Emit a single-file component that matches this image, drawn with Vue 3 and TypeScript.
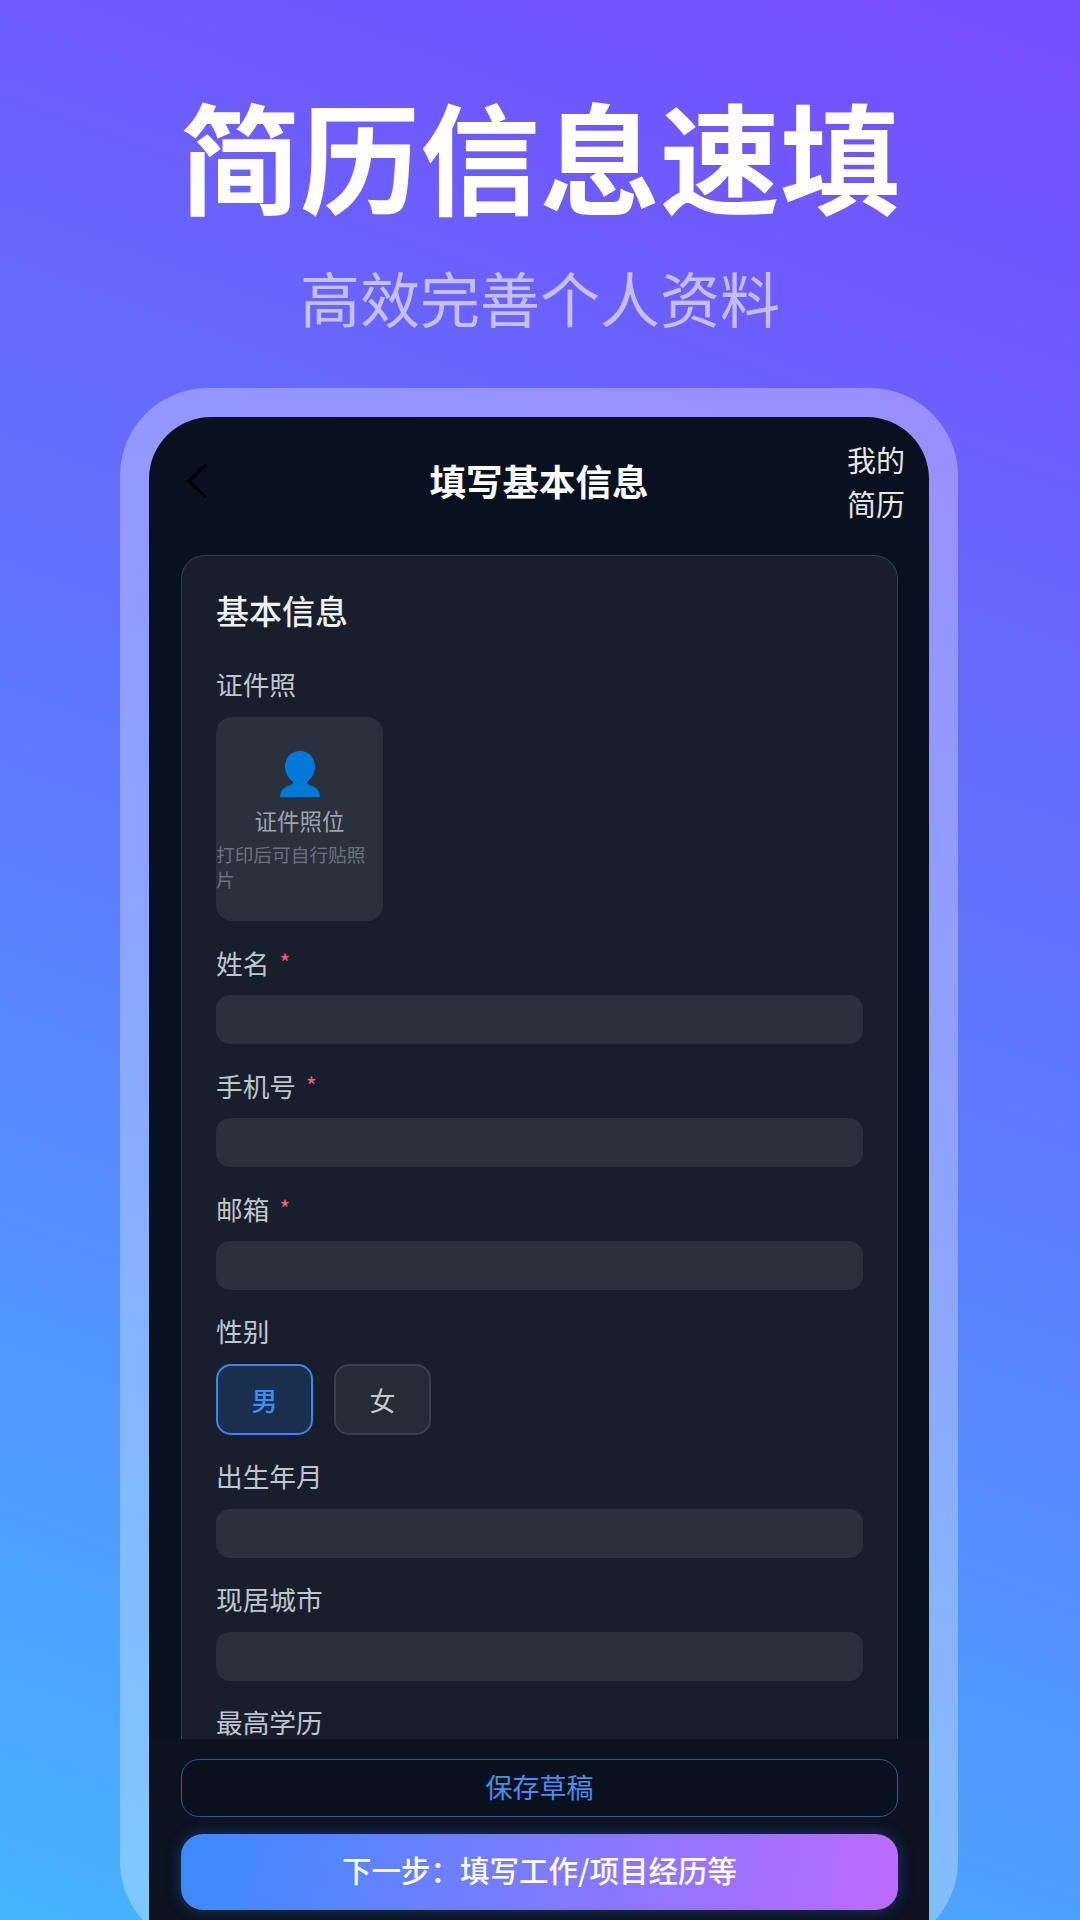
<script setup lang="ts">
interface Field {
  label: string
  required?: boolean
}
const contactFields: Field[] = [
  { label: '姓名', required: true },
  { label: '手机号', required: true },
  { label: '邮箱', required: true },
]
const extraFields: Field[] = [{ label: '出生年月' }, { label: '现居城市' }]
</script>

<template>
  <div class="page">
    <header class="hero">
      <h1 class="hero-title">简历信息速填</h1>
      <p class="hero-sub">高效完善个人资料</p>
    </header>
    <div class="frame">
      <div class="screen">
        <div class="nav">
          <svg class="back" width="20" height="34" viewBox="0 0 20 34" fill="none">
            <path d="M19 1 L2 17 L19 33" stroke="#000" stroke-width="3" />
          </svg>
          <div class="nav-title">填写基本信息</div>
          <div class="nav-link">我的简历</div>
        </div>
        <div class="scroller">
          <section class="card">
            <h2 class="card-title">基本信息</h2>
            <div class="field">
              <div class="label">证件照</div>
              <div class="photo">
                <svg class="photo-icon" width="40" height="46" viewBox="0 0 40 46">
                  <path
                    d="M20 0C29 0 35 7 35 15C35 23 31 28 27 31C27 33 29 34 32 35C37 37 40 41 40 46H0C0 41 3 37 8 35C11 34 13 33 13 31C9 28 5 23 5 15C5 7 11 0 20 0Z"
                    fill="#0078d7"
                  />
                </svg>
                <div class="photo-text">证件照位</div>
                <div class="photo-hint">打印后可自行贴照片</div>
              </div>
            </div>
            <div v-for="f in contactFields" :key="f.label" class="field">
              <div class="label">
                {{ f.label }}<span v-if="f.required" class="star">*</span>
              </div>
              <div class="input"></div>
            </div>
            <div class="field">
              <div class="label">性别</div>
              <div class="options">
                <div class="option option-on">男</div>
                <div class="option">女</div>
              </div>
            </div>
            <div v-for="f in extraFields" :key="f.label" class="field">
              <div class="label">{{ f.label }}</div>
              <div class="input"></div>
            </div>
            <div class="field">
              <div class="label">最高学历</div>
              <div class="input"></div>
            </div>
          </section>
        </div>
        <footer class="actions">
          <div class="btn-save">保存草稿</div>
          <div class="btn-next">下一步：填写工作/项目经历等</div>
        </footer>
      </div>
    </div>
  </div>
</template>

<style>
html,
body {
  margin: 0;
  padding: 0;
}
</style>

<style scoped>
.page {
  width: 1080px;
  height: 1920px;
  overflow: hidden;
  background: linear-gradient(200deg, #764dff 0%, #5a80ff 56%, #45b4ff 100%);
  font-family: "Noto Sans CJK SC", "Noto Sans", sans-serif;
}
.hero {
  padding-top: 79px;
  text-align: center;
}
.hero-title {
  margin: 0;
  font-size: 120px;
  line-height: 150px;
  font-weight: 700;
  color: #fff;
}
.hero-sub {
  margin: 30px 0 0;
  font-size: 60px;
  line-height: 76px;
  font-weight: 400;
  color: rgba(255, 255, 255, 0.6);
}
.frame {
  margin: 53px 0 0 120px;
  width: 838px;
  height: 1561px;
  box-sizing: border-box;
  padding: 29px;
  border-radius: 88px;
  background: rgba(255, 255, 255, 0.3);
}
.screen {
  width: 780px;
  height: 1503px;
  display: flex;
  flex-direction: column;
  border-radius: 62px 62px 0 0;
  overflow: hidden;
  background: #08111f;
}
.nav {
  flex: none;
  height: 128px;
  padding: 0 24px;
  display: grid;
  grid-template-columns: 1fr auto 1fr;
  align-items: center;
}
.back {
  margin-left: 14px;
}
.nav-title {
  font-size: 36.5px;
  line-height: 46px;
  font-weight: 700;
  color: #fff;
}
.nav-link {
  justify-self: end;
  width: 58px;
  font-size: 29px;
  line-height: 44px;
  color: #e5e7eb;
}
.scroller {
  flex: 1;
  min-height: 0;
  overflow: hidden;
  padding: 10px 31px 0 32px;
}
.card {
  box-sizing: border-box;
  padding: 36px 34px 0;
  border: 1px solid rgba(255, 255, 255, 0.14);
  border-radius: 24px;
  background: #171f2d;
}
.card-title {
  margin: 0 0 36px;
  height: 40px;
  font-size: 33px;
  line-height: 36px;
  font-weight: 500;
  color: #eef1f4;
}
.field {
  margin-bottom: 25px;
}
.label {
  height: 36px;
  margin-bottom: 13px;
  font-size: 26.7px;
  line-height: 32px;
  color: #bfc5cd;
}
.star {
  margin-left: 10px;
  font-size: 23px;
  color: #ff5c7a;
  vertical-align: 2px;
}
.photo {
  box-sizing: border-box;
  width: 167px;
  height: 204px;
  padding-top: 34px;
  border-radius: 16px;
  background: #2a303c;
  display: flex;
  flex-direction: column;
  align-items: center;
}
.photo-icon {
  flex: none;
}
.photo-text {
  margin-top: 8px;
  font-size: 22.5px;
  line-height: 30px;
  color: #9ca3af;
}
.photo-hint {
  align-self: stretch;
  margin-top: 6px;
  font-size: 18.7px;
  line-height: 25px;
  color: #6b7280;
}
.input {
  height: 49px;
  border-radius: 14px;
  background: #2a303c;
}
.options {
  display: flex;
  gap: 21px;
}
.option {
  box-sizing: border-box;
  width: 97px;
  height: 71px;
  display: flex;
  align-items: center;
  justify-content: center;
  border: 2px solid #3a404d;
  border-radius: 15px;
  background: #252b37;
  font-size: 26px;
  color: #c5c9cf;
}
.option-on {
  border-color: #3b86f0;
  background: #1b2f4e;
  color: #3f8cff;
  font-weight: 500;
}
.actions {
  flex: none;
  height: 181px;
  box-sizing: border-box;
  padding: 20px 31px 0 32px;
  background: #0b1220;
}
.btn-save {
  box-sizing: border-box;
  height: 58px;
  border: 1px solid #2b5a99;
  border-radius: 18px;
  background: #0a111e;
  font-size: 27px;
  line-height: 54px;
  text-align: center;
  color: #4b8df0;
}
.btn-next {
  margin-top: 17px;
  height: 76px;
  border-radius: 22px;
  background: linear-gradient(100deg, #3b8bff 0%, #bd6bff 100%);
  box-shadow: 0 0 16px rgba(59, 130, 246, 0.35);
  font-size: 29.5px;
  line-height: 71px;
  font-weight: 500;
  text-align: center;
  color: #fff;
}
</style>
